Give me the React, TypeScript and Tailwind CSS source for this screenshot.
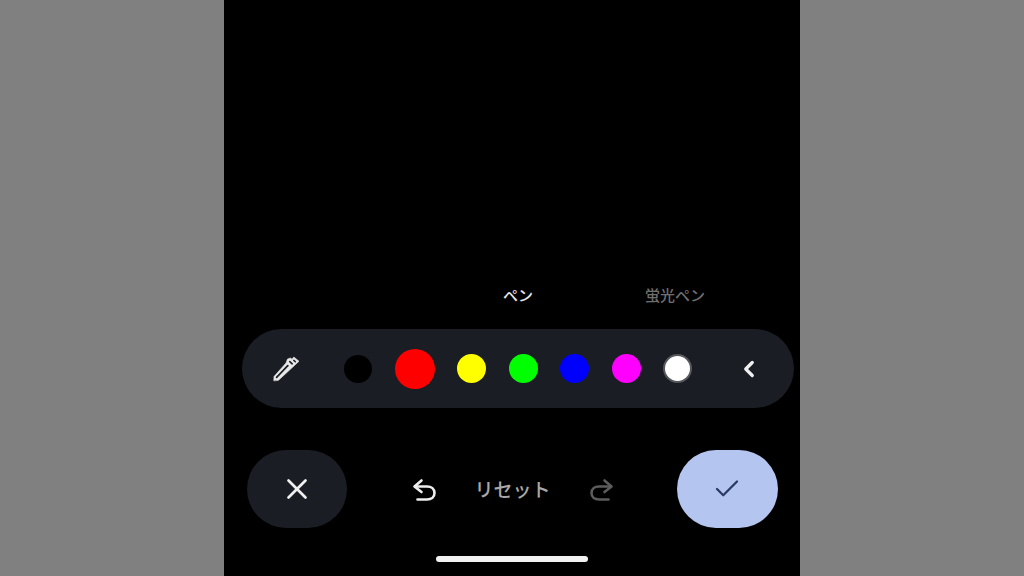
import { Check, ChevronLeft, X } from 'lucide-react'

const jp = 'font-["Noto_Sans_CJK_JP","Noto_Sans",sans-serif]'

// ── icons ──────────────────────────────────────────────────────────────────

function PenIcon() {
  return (
    <svg width="28" height="28" viewBox="0 0 28 28" fill="none" strokeLinecap="round">
      <path d="M1.8 25.5 L2 21.5 L14 8 L15.5 4 L18.5 3 L20 4.2 L21.8 2 L27 6.2 L20 12.8 L6.5 25.2 Z" fill="#e8e8e8" stroke="#e8e8e8" strokeWidth="0.6" strokeLinejoin="round" />
      <path d="M4.6 22.4 L15.8 10.6" stroke="#1a1d23" strokeWidth="1.7" />
      <path d="M17.8 6.6 L20.2 8.8" stroke="#1a1d23" strokeWidth="1.7" />
      <path d="M21.8 5.4 L23.4 6.8" stroke="#1a1d23" strokeWidth="1.5" />
    </svg>
  )
}

function UndoIcon() {
  return (
    <svg width="24" height="24" viewBox="0 0 24 24" fill="none" stroke="#eeeeee" strokeWidth="2.6" strokeLinejoin="round" strokeLinecap="round">
      <path d="M9.5 3.5 L2.5 9.5 L9.5 15" />
      <path d="M3 9.5 H15 C19.5 9.5 22.5 12 22.5 16 C22.5 20 19.5 22.5 15 22.5 H5.5" />
    </svg>
  )
}

function RedoIcon() {
  return (
    <svg width="24" height="24" viewBox="0 0 24 24" fill="none" stroke="#5c5c5c" strokeWidth="2.6" strokeLinejoin="round" strokeLinecap="round">
      <path d="M14.5 3.5 L21.5 9.5 L14.5 15" />
      <path d="M21 9.5 H9 C4.5 9.5 1.5 12 1.5 16 C1.5 20 4.5 22.5 9 22.5 H18.5" />
    </svg>
  )
}

// ── main export ────────────────────────────────────────────────────────────

export default function App() {
  return (
    <div className={`flex h-[576px] w-[1024px] justify-center overflow-hidden bg-[#808080] ${jp}`}>
      <div className="flex h-full w-[576px] flex-col bg-black pt-[283px]">
        {/* mode labels */}
        <div className="flex h-[24px] items-center pl-[279px] text-[15px] font-medium leading-[22px]">
          <span className="text-[#e8e8e8]">ペン</span>
          <span className="ml-[112px] text-[#6f6f6f]">蛍光ペン</span>
        </div>

        {/* colour palette */}
        <div className="ml-[17.5px] mt-[22px] flex h-[79px] w-[552.5px] items-center rounded-full bg-[#1a1d23] pl-[30.5px]">
          <PenIcon />
          <div className="ml-[44px] flex items-center gap-[22.5px]">
            <div className="h-[28px] w-[28px] rounded-full bg-black" />
            <div className="h-[40px] w-[40px] rounded-full bg-[#ff0000]" />
            <div className="h-[29px] w-[29px] rounded-full bg-[#ffff00]" />
            <div className="h-[29px] w-[29px] rounded-full bg-[#00ff00]" />
            <div className="h-[29px] w-[29px] rounded-full bg-[#0000ff]" />
            <div className="h-[29px] w-[29px] rounded-full bg-[#ff00ff]" />
            <div className="h-[29px] w-[29px] rounded-full border-2 border-[#55575b] bg-white" />
          </div>
          <ChevronLeft className="ml-[43.5px] h-[26px] w-[26px] text-[#f0f0f0]" strokeWidth={3} />
        </div>

        {/* action row */}
        <div className="ml-[22.5px] mt-[42px] flex h-[78px] w-[531.5px] items-center">
          <button className="flex h-[78px] w-[100.5px] items-center justify-center rounded-[39px] bg-[#1a1d23]">
            <X className="h-[34px] w-[34px] text-[#f0f0f0]" strokeWidth={1.9} />
          </button>
          <div className="ml-[64.5px] flex items-center">
            <UndoIcon />
            <span className="ml-[39px] w-[77px] text-[19px] font-medium leading-[26px] text-[#a8a8a8]">リセット</span>
            <span className="ml-[38px]"><RedoIcon /></span>
          </div>
          <button className="ml-auto flex h-[78px] w-[101.5px] items-center justify-center rounded-[39px] bg-[#b4c6ef]">
            <Check className="h-[30px] w-[30px] text-[#2a3a62]" strokeWidth={1.8} />
          </button>
        </div>

        {/* home indicator */}
        <div className="ml-[212px] mt-[28px] h-[6px] w-[152px] rounded-full bg-[#f2f2f2]" />
      </div>
    </div>
  )
}
